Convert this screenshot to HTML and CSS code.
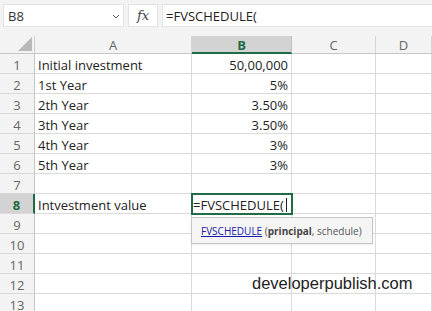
FILE: index.html
```html
<!DOCTYPE html>
<html>
<head>
<meta charset="utf-8">
<link rel="stylesheet" href="styles.css">
</head>
<body>
<div class="toolbar">
  <div class="namebox"><span>B8</span><svg class="chev" width="8" height="5" viewBox="0 0 8 5"><path d="M1 1l3 3 3-3" fill="none" stroke="#555" stroke-width="1"/></svg></div>
  <div class="fxbox"><span class="fx">fx</span></div>
  <div class="formula">=FVSCHEDULE(</div>
</div>
<div class="grid">
  <div class="corner"><svg width="14" height="14" viewBox="0 0 14 14"><path d="M14 0V14H0Z" fill="#b8b8b8"/></svg></div>
  <div class="colhead">A</div>
  <div class="colhead sel">B</div>
  <div class="colhead">C</div>
  <div class="colhead">D</div>

  <div class="rowhead">1</div><div class="cell">Initial investment</div><div class="cell num">50,00,000</div><div class="cell"></div><div class="cell"></div>
  <div class="rowhead">2</div><div class="cell">1st Year</div><div class="cell num">5%</div><div class="cell"></div><div class="cell"></div>
  <div class="rowhead">3</div><div class="cell">2th Year</div><div class="cell num">3.50%</div><div class="cell"></div><div class="cell"></div>
  <div class="rowhead">4</div><div class="cell">3th Year</div><div class="cell num">3.50%</div><div class="cell"></div><div class="cell"></div>
  <div class="rowhead">5</div><div class="cell">4th Year</div><div class="cell num">3%</div><div class="cell"></div><div class="cell"></div>
  <div class="rowhead">6</div><div class="cell">5th Year</div><div class="cell num">3%</div><div class="cell"></div><div class="cell"></div>
  <div class="rowhead">7</div><div class="cell"></div><div class="cell"></div><div class="cell"></div><div class="cell"></div>
  <div class="rowhead sel">8</div><div class="cell">Intvestment value</div><div class="cell active">=FVSCHEDULE(<span class="caret"></span>
    <div class="tip"><span><span class="fn">FVSCHEDULE</span> (<b>principal</b>, schedule)</span></div>
  </div><div class="cell"></div><div class="cell"></div>
  <div class="rowhead">9</div><div class="cell"></div><div class="cell"></div><div class="cell"></div><div class="cell"></div>
  <div class="rowhead">10</div><div class="cell"></div><div class="cell"></div><div class="cell"></div><div class="cell"></div>
  <div class="rowhead">11</div><div class="cell"></div><div class="cell"></div><div class="cell"></div><div class="cell"></div>
  <div class="rowhead">12</div><div class="cell"></div><div class="cell"></div><div class="cell"></div><div class="cell"></div>
  <div class="rowhead">13</div><div class="cell"></div><div class="cell"></div><div class="cell"></div><div class="cell"></div>
</div>
<div class="watermark">developerpublish.com</div>
</body>
</html>
```
FILE: styles.css
```css
* { box-sizing: border-box; }
html, body { margin: 0; padding: 0; }
body {
  width: 432px;
  height: 311px;
  overflow: hidden;
  background: #fff;
  font-family: "Open Sans", "Noto Sans", sans-serif;
  font-size: 13px;
  color: #222;
  position: relative;
}
.toolbar {
  height: 36px;
  background: #f3f3f3;
  display: flex;
  align-items: flex-start;
  padding: 4px 0 0 3px;
  gap: 4px;
}
.namebox {
  width: 121px;
  height: 23px;
  background: #fff;
  border: 1px solid #e3e3e3;
  display: flex;
  align-items: center;
  justify-content: space-between;
  padding: 1px 3px 0 4px;
  font-size: 13px;
  color: #333;
}
.chev { margin-top: 1px; }
.fxbox {
  width: 30px;
  height: 23px;
  background: #fff;
  border: 1px solid #e3e3e3;
  display: flex;
  align-items: center;
  justify-content: center;
}
.fx {
  font-family: "DejaVu Serif", "Liberation Serif", serif;
  font-style: italic;
  font-size: 13px;
  color: #444;
}
.formula {
  flex: 1;
  height: 23px;
  background: #fff;
  border-top: 1px solid #e3e3e3;
  border-bottom: 1px solid #e3e3e3;
  border-left: 1px solid #e3e3e3;
  padding: 1px 0 0 3px;
  display: flex;
  align-items: center;
  font-size: 13px;
  color: #222;
}
.grid {
  display: grid;
  grid-template-columns: 35px 157px 100px 84px 56px;
  grid-template-rows: 18px repeat(13, 20px);
}
.corner {
  background: #f3f3f3;
  border-right: 1px solid #d0d0d0;
  border-bottom: 1px solid #c6c6c6;
  display: flex;
  align-items: flex-end;
  justify-content: flex-end;
  padding: 0 2px 2px 0;
}
.colhead {
  background: #f3f3f3;
  border-right: 1px solid #d6d6d6;
  border-bottom: 1px solid #c6c6c6;
  display: flex;
  align-items: center;
  justify-content: center;
  padding-top: 1px;
  color: #666;
  font-size: 13px;
}
.colhead.sel {
  background: #d3d3d3;
  color: #1e6b45;
  font-weight: bold;
  border-bottom: 2px solid #1e6b45;
  border-right-color: #c0c0c0;
  padding-top: 2px;
}
.rowhead {
  background: #f3f3f3;
  border-right: 1px solid #c6c6c6;
  border-bottom: 1px solid #d8d8d8;
  display: flex;
  align-items: center;
  justify-content: center;
  padding-top: 2px;
  color: #666;
  font-size: 13px;
}
.rowhead.sel {
  background: #d3d3d3;
  color: #1e6b45;
  font-weight: bold;
  border-right: 2px solid #1e6b45;
}
.cell {
  border-right: 1px solid #dadada;
  border-bottom: 1px solid #dadada;
  display: flex;
  align-items: center;
  padding: 2px 3px 0;
  white-space: nowrap;
  color: #222;
  position: relative;
}
.cell.num { justify-content: flex-end; padding-right: 3px; }
.cell.active {
  outline: 2px solid #1e6b45;
  outline-offset: -1px;
  z-index: 2;
  padding-left: 1px;
}
.caret {
  display: inline-block;
  width: 1px;
  height: 14px;
  background: #222;
  margin-left: 2px;
}
.tip {
  position: absolute;
  left: -1px;
  top: 23px;
  width: 182px;
  height: 27px;
  background: #f5f5f5;
  border: 1px solid #c6c6c6;
  box-shadow: 0 1px 2px rgba(0,0,0,0.08);
  display: flex;
  align-items: center;
  padding-left: 9px;
  font-size: 10px;
  color: #555;
}
.tip .fn { color: #1a1aa6; text-decoration: underline; }
.tip b { color: #444; }
.watermark {
  position: absolute;
  left: 252px;
  top: 274px;
  font-family: "Liberation Sans", Arial, sans-serif;
  font-size: 16.5px;
  color: #222;
}
```
